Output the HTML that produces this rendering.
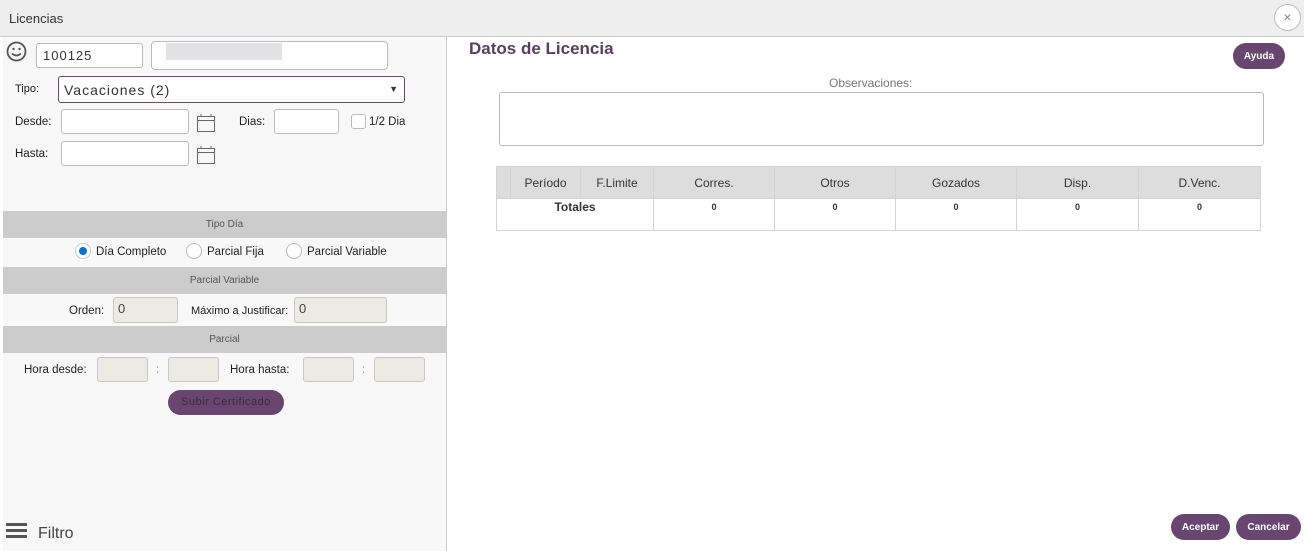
<!DOCTYPE html><html><head><style>
*{box-sizing:border-box;margin:0;padding:0}
body{width:1304px;height:551px;position:relative;overflow:hidden;background:#fff;font-family:"Liberation Sans",Arial,sans-serif;color:#333}
.a{position:absolute}
.inp{position:absolute;background:#fff;border:1px solid #bbb;border-radius:3px}
.dis{position:absolute;background:#ebebe4;border:1px solid #c8c8c8;border-radius:3px;font-size:13px;padding:3px 4px;color:#444}
.band{position:absolute;left:3px;width:443px;background:#cccccc;font-size:10px;color:#555;text-align:center}
.lbl{position:absolute;font-size:11.5px;color:#222}
.btn{position:absolute;background:#68466f;color:#fff;border-radius:14px;font-size:10px;font-weight:bold;text-align:center}
.rad{position:absolute;width:16px;height:16px;border:1px solid #bbb;border-radius:50%;background:#fff}
table{border-collapse:collapse;position:absolute;left:496px;top:166px;width:765px;font-size:12px}
td,th{border:1px solid #d4d4d4;text-align:center;font-weight:normal}
th{background:#dddddd;height:32px}
td{height:32px;vertical-align:top;font-size:9px;font-weight:bold;padding-top:3px}
</style></head><body>
<div class="a" style="left:0;top:0;width:1304px;height:37px;background:#eee;border-bottom:1px solid #ccc"></div>
<div class="a" style="left:9px;top:11px;font-size:13px;color:#333">Licencias</div>
<div class="a" style="left:1274px;top:4px;width:27px;height:27px;border:1px solid #bbb;border-radius:50%;background:#fff;text-align:center;line-height:24px;font-size:14px;color:#888">×</div>
<div class="a" style="left:3px;top:37px;width:444px;height:514px;background:#f8f8f8;border-right:1px solid #ccc"></div>
<svg class="a" style="left:6px;top:41px" width="21" height="21" viewBox="0 0 21 21"><circle cx="10.5" cy="10.5" r="9" fill="none" stroke="#555" stroke-width="1.8"/><circle cx="7.5" cy="8" r="1.2" fill="#555"/><circle cx="13.5" cy="8" r="1.2" fill="#555"/><path d="M6 12.5q4.5 4 9 0" fill="none" stroke="#555" stroke-width="1.6"/></svg>
<div class="inp" style="left:36px;top:43px;width:107px;height:25px;font-size:13px;padding:4px 6px;letter-spacing:1px">100125</div>
<div class="inp" style="left:151px;top:41px;width:237px;height:29px;border-radius:4px"></div>
<div class="a" style="left:166px;top:43px;width:116px;height:17px;background:#e2e2e4"></div>
<div class="lbl" style="left:15px;top:83px;font-size:11px">Tipo:</div>
<div class="inp" style="left:58px;top:76px;width:347px;height:27px;border-color:#68466f;font-size:14px;padding:5px 5px;letter-spacing:1px">Vacaciones (2)<span style="position:absolute;right:5px;top:7px;font-size:9px">▼</span></div>
<div class="lbl" style="left:15px;top:116px">Desde:</div>
<div class="inp" style="left:61px;top:109px;width:128px;height:25px"></div>
<svg class="a" style="left:196px;top:113px" width="20" height="20"><rect x="1.5" y="3.5" width="17" height="15" fill="none" stroke="#666"/><line x1="1.5" y1="7.5" x2="18.5" y2="7.5" stroke="#666"/><line x1="5" y1="1" x2="5" y2="4" stroke="#666"/><line x1="15" y1="1" x2="15" y2="4" stroke="#666"/></svg>
<div class="lbl" style="left:239px;top:116px">Dias:</div>
<div class="inp" style="left:274px;top:109px;width:65px;height:25px"></div>
<div class="inp" style="left:351px;top:114px;width:15px;height:15px"></div>
<div class="lbl" style="left:369px;top:116px">1/2 Dia</div>
<div class="lbl" style="left:15px;top:148px">Hasta:</div>
<div class="inp" style="left:61px;top:141px;width:128px;height:25px"></div>
<svg class="a" style="left:196px;top:145px" width="20" height="20"><rect x="1.5" y="3.5" width="17" height="15" fill="none" stroke="#666"/><line x1="1.5" y1="7.5" x2="18.5" y2="7.5" stroke="#666"/><line x1="5" y1="1" x2="5" y2="4" stroke="#666"/><line x1="15" y1="1" x2="15" y2="4" stroke="#666"/></svg>
<div class="band" style="top:211px;height:27px;line-height:27px">Tipo Día</div>
<div class="rad" style="left:75px;top:243px;border-color:#ccc"><div style="position:absolute;left:3px;top:3px;width:8px;height:8px;border-radius:50%;background:#0a6fd0"></div></div>
<div class="lbl" style="left:96px;top:246px">Día Completo</div>
<div class="rad" style="left:186px;top:243px"></div>
<div class="lbl" style="left:207px;top:246px">Parcial Fija</div>
<div class="rad" style="left:286px;top:243px"></div>
<div class="lbl" style="left:307px;top:246px">Parcial Variable</div>
<div class="band" style="top:267px;height:27px;line-height:27px">Parcial Variable</div>
<div class="lbl" style="left:69px;top:305px">Orden:</div>
<div class="dis" style="left:113px;top:297px;width:65px;height:26px">0</div>
<div class="lbl" style="left:191px;top:305px;font-size:11px">Máximo a Justificar:</div>
<div class="dis" style="left:294px;top:297px;width:93px;height:26px">0</div>
<div class="band" style="top:326px;height:27px;line-height:27px">Parcial</div>
<div class="lbl" style="left:24px;top:364px">Hora desde:</div>
<div class="dis" style="left:97px;top:357px;width:51px;height:25px"></div>
<div class="lbl" style="left:156px;top:364px;color:#999">:</div>
<div class="dis" style="left:168px;top:357px;width:51px;height:25px"></div>
<div class="lbl" style="left:230px;top:364px">Hora hasta:</div>
<div class="dis" style="left:303px;top:357px;width:51px;height:25px"></div>
<div class="lbl" style="left:362px;top:364px;color:#999">:</div>
<div class="dis" style="left:374px;top:357px;width:51px;height:25px"></div>
<div class="btn" style="left:168px;top:390px;width:116px;height:25px;line-height:25px;font-size:11px;color:#3d2a41;letter-spacing:.5px;font-weight:normal">Subir Certificado</div>
<div class="a" style="left:6px;top:523px;width:21px;height:3px;background:#555;box-shadow:0 6px 0 #555,0 12px 0 #555"></div>
<div class="a" style="left:38px;top:525px;font-size:16px;color:#444">Filtro</div>
<div class="a" style="left:469px;top:39px;font-size:17px;font-weight:bold;color:#5a3e5f">Datos de Licencia</div>
<div class="btn" style="left:1233px;top:43px;width:52px;height:26px;line-height:28px">Ayuda</div>
<div class="a" style="left:829px;top:76px;font-size:12px;color:#777">Observaciones:</div>
<div class="inp" style="left:499px;top:92px;width:765px;height:54px;border-color:#bbb"></div>
<table><tr><th style="width:14px"></th><th style="width:70px">Período</th><th style="width:73px">F.Limite</th><th style="width:121px">Corres.</th><th style="width:121px">Otros</th><th style="width:121px">Gozados</th><th style="width:122px">Disp.</th><th>D.Venc.</th></tr>
<tr><td colspan="3" style="font-size:12px;padding-top:1px">Totales</td><td>0</td><td>0</td><td>0</td><td>0</td><td>0</td></tr></table>
<div class="btn" style="left:1171px;top:514px;width:59px;height:26px;line-height:28px">Aceptar</div>
<div class="btn" style="left:1236px;top:514px;width:65px;height:26px;line-height:28px">Cancelar</div>
</body></html>
